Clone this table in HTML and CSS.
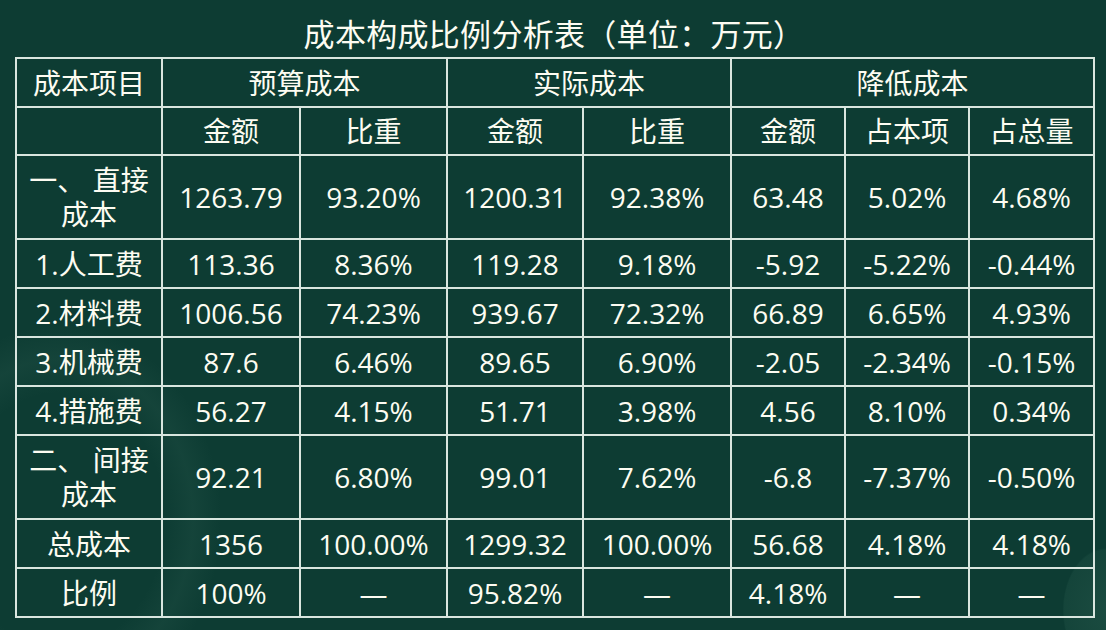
FILE: index.html
```html
<!DOCTYPE html>
<html lang="zh">
<head>
<meta charset="utf-8">
<title>成本构成比例分析表</title>
<link rel="stylesheet" href="styles.css">
</head>
<body>
<div class="page">
  <h1 class="title">成本构成比例分析表（单位：万元）</h1>
  <table class="cost">
    <colgroup>
      <col class="c1"><col class="c2"><col class="c3"><col class="c4"><col class="c5"><col class="c6"><col class="c7"><col class="c8">
    </colgroup>
    <tr class="r-h1">
      <td>成本项目</td>
      <td colspan="2">预算成本</td>
      <td colspan="2">实际成本</td>
      <td colspan="3">降低成本</td>
    </tr>
    <tr class="r-h2">
      <td></td>
      <td>金额</td><td>比重</td>
      <td>金额</td><td>比重</td>
      <td>金额</td><td>占本项</td><td>占总量</td>
    </tr>
    <tr class="r-tall">
      <td class="name">一、&nbsp;直接成本</td>
      <td>1263.79</td><td>93.20%</td><td>1200.31</td><td>92.38%</td><td>63.48</td><td>5.02%</td><td>4.68%</td>
    </tr>
    <tr class="r">
      <td>1.人工费</td>
      <td>113.36</td><td>8.36%</td><td>119.28</td><td>9.18%</td><td>-5.92</td><td>-5.22%</td><td>-0.44%</td>
    </tr>
    <tr class="r">
      <td>2.材料费</td>
      <td>1006.56</td><td>74.23%</td><td>939.67</td><td>72.32%</td><td>66.89</td><td>6.65%</td><td>4.93%</td>
    </tr>
    <tr class="r">
      <td>3.机械费</td>
      <td>87.6</td><td>6.46%</td><td>89.65</td><td>6.90%</td><td>-2.05</td><td>-2.34%</td><td>-0.15%</td>
    </tr>
    <tr class="r">
      <td>4.措施费</td>
      <td>56.27</td><td>4.15%</td><td>51.71</td><td>3.98%</td><td>4.56</td><td>8.10%</td><td>0.34%</td>
    </tr>
    <tr class="r-tall">
      <td class="name">二、&nbsp;间接成本</td>
      <td>92.21</td><td>6.80%</td><td>99.01</td><td>7.62%</td><td>-6.8</td><td>-7.37%</td><td>-0.50%</td>
    </tr>
    <tr class="r">
      <td>总成本</td>
      <td>1356</td><td>100.00%</td><td>1299.32</td><td>100.00%</td><td>56.68</td><td>4.18%</td><td>4.18%</td>
    </tr>
    <tr class="r">
      <td>比例</td>
      <td>100%</td><td>—</td><td>95.82%</td><td>—</td><td>4.18%</td><td>—</td><td>—</td>
    </tr>
  </table>
</div>
</body>
</html>
```

FILE: styles.css
```css
html, body {
  margin: 0;
  padding: 0;
}
body {
  width: 1106px;
  height: 630px;
  overflow: hidden;
  background-color: #0d3c33;
  background-image:
    radial-gradient(ellipse 190px 230px at 60px 520px, rgba(255,255,255,0) 55%, rgba(120,170,150,0.07) 70%, rgba(255,255,255,0) 85%),
    radial-gradient(ellipse 70px 100px at 1106px 610px, rgba(110,170,145,0.14) 0%, rgba(110,170,145,0.08) 60%, rgba(255,255,255,0) 62%);
  color: #fdfcf2;
  font-family: "Open Sans", "Noto Sans CJK SC", sans-serif;
}
.page {
  display: flex;
  flex-direction: column;
  padding-left: 15px;
}
.title {
  margin: 0;
  width: 1078px;
  height: 57px;
  display: flex;
  align-items: center;
  justify-content: center;
  padding-top: 8px;
  box-sizing: border-box;
  font-family: "Noto Sans CJK SC", sans-serif;
  font-weight: 400;
  font-size: 31px;
  letter-spacing: 0.3px;
}
.cost {
  border-collapse: collapse;
  table-layout: fixed;
  width: 1078px;
}
.cost td {
  border: 2px solid #d9e6df;
  text-align: center;
  vertical-align: middle;
  padding: 0 4px;
  font-size: 28px;
  line-height: 34px;
  white-space: normal;
}
.c1 { width: 146px; }
.c2 { width: 138px; }
.c3 { width: 147px; }
.c4 { width: 136px; }
.c5 { width: 148px; }
.c6 { width: 114px; }
.c7 { width: 124px; }
.c8 { width: 125px; }
.r-h1 { height: 49px; }
.r-h2 { height: 48px; }
.r { height: 49px; }
.r-tall { height: 84px; }
.name {
  line-height: 33px;
}
```
